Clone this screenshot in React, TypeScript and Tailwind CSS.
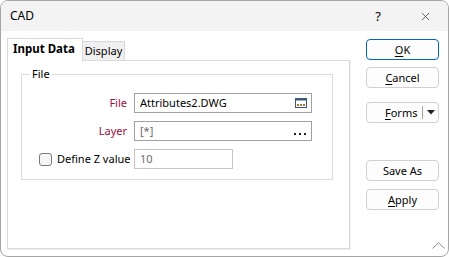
import { X } from "lucide-react";

function Btn({
  children,
  primary = false,
  className = "",
}: {
  children: React.ReactNode;
  primary?: boolean;
  className?: string;
}) {
  return (
    <button
      className={
        "h-[21px] w-[73px] rounded-[4px] border bg-[#fdfdfd] text-black flex items-center justify-center " +
        (primary ? "border-[#0067c0]" : "border-[#d0d0d0]") +
        " " +
        className
      }
    >
      {children}
    </button>
  );
}

function FileIcon() {
  return (
    <svg width="12" height="10" viewBox="0 0 12 10">
      <rect x="0.5" y="0.5" width="11" height="9" fill="#fff" stroke="#3c5a78" />
      <rect x="0.5" y="0.5" width="11" height="2" fill="#3c5a78" />
      <rect x="2" y="6" width="2" height="2" fill="#a57c3c" />
      <rect x="5" y="6" width="2" height="2" fill="#a57c3c" />
      <rect x="8" y="6" width="2" height="2" fill="#a57c3c" />
    </svg>
  );
}

export default function App() {
  return (
    <div className="w-[449px] h-[257px] bg-white border border-[#a5a5a5] rounded-[8px] overflow-hidden flex flex-col font-[family-name:'Noto_Sans',sans-serif] text-[11px] leading-[16px] text-black whitespace-nowrap">
      {/* title bar */}
      <div className="h-[30px] shrink-0 bg-[#f3f3f3] flex items-center pl-[9px]">
        <span className="text-[12px]">CAD</span>
        <span className="ml-auto text-[13px]">?</span>
        <X className="ml-[38px] mr-[16px] w-[13px] h-[13px] text-[#222]" strokeWidth={1.2} />
      </div>

      {/* body */}
      <div className="flex-1 flex pl-[6px] pt-[7px]">
        <div className="w-[343px] flex flex-col">
          <div className="flex items-end h-[22px]">
            <div className="relative z-10 -mb-px h-[23px] w-[76px] border border-b-0 border-[#d9d9d9] bg-white font-bold text-[11.5px] pl-[5px] flex items-center pb-[2px]">
              Input Data
            </div>
            <div className="h-[19px] w-[42px] border border-l-0 border-b-0 border-[#d9d9d9] bg-[#f0f0f0] flex items-center justify-center">
              Display
            </div>
          </div>
          <div className="h-[189px] border border-[#d9d9d9] shadow-[1px_1px_0_#efefef] pl-[13px]">
            <fieldset className="mt-[5px] w-[312px] border border-[#dcdcdc] pt-[11px] pb-[10px] flex flex-col gap-[8px]">
              <legend className="ml-[8px] px-[2px]">File</legend>
              <div className="flex items-center h-[20px]">
                <span className="w-[105px] text-right text-[#9a1040]">File</span>
                <div className="ml-[7px] w-[178px] h-[20px] border border-[#a0a0a0] flex items-center pl-[5px] pr-[4px]">
                  <span>Attributes2.DWG</span>
                  <span className="ml-auto flex">
                    <FileIcon />
                  </span>
                </div>
              </div>
              <div className="flex items-center h-[20px]">
                <span className="w-[105px] text-right text-[#9a1040]">Layer</span>
                <div className="ml-[7px] w-[178px] h-[20px] border border-[#a0a0a0] flex items-center pl-[5px] pr-[5px]">
                  <span className="text-[#6d6d6d]">[*]</span>
                  <span className="ml-auto flex gap-[3px] items-end h-[8px]">
                    <span className="w-[2px] h-[2px] bg-[#222]" />
                    <span className="w-[2px] h-[2px] bg-[#222]" />
                    <span className="w-[2px] h-[2px] bg-[#222]" />
                  </span>
                </div>
              </div>
              <div className="flex items-center h-[20px]">
                <div className="w-[105px] flex items-center pl-[17px]">
                  <span className="shrink-0 w-[13px] h-[13px] rounded-[3px] border border-[#7a7a7a] bg-[#f7f7f7]" />
                  <span className="ml-[5px]">Define Z value</span>
                </div>
                <div className="ml-[7px] w-[99px] h-[20px] border border-[#c4c4c4] flex items-center pl-[5px] text-[#6d6d6d]">
                  10
                </div>
              </div>
            </fieldset>
          </div>
        </div>

        {/* buttons */}
        <div className="ml-[16px] w-[73px] flex flex-col pt-[1px] pb-[7px]">
          <Btn primary>
            <span className="underline underline-offset-2">O</span>K
          </Btn>
          <Btn className="mt-[7px]">
            <span className="underline underline-offset-2">C</span>ancel
          </Btn>
          <button className="mt-[14px] h-[21px] w-[73px] rounded-[4px] border border-[#d0d0d0] bg-[#fdfdfd] flex items-center">
            <span className="w-[55px] pl-[18px] text-left">
              <span className="underline underline-offset-2">F</span>orms
            </span>
            <span className="w-px h-[13px] bg-[#a0a0a0]" />
            <span className="flex-1 flex justify-center">
              <svg width="8" height="5" viewBox="0 0 8 5">
                <path d="M0 0h8L4 4.5z" fill="#222" />
              </svg>
            </span>
          </button>
          <Btn className="mt-[37px]">Save As</Btn>
          <Btn className="mt-[8px]">
            <span className="underline underline-offset-2">A</span>pply
          </Btn>
          <svg className="mt-auto self-end -mr-[6px]" width="13" height="7" viewBox="0 0 13 7">
            <path d="M0.5 6.5L6.5 0.8L12.5 6.5" fill="none" stroke="#8a8a8a" strokeWidth="1" />
          </svg>
        </div>
      </div>
    </div>
  );
}
